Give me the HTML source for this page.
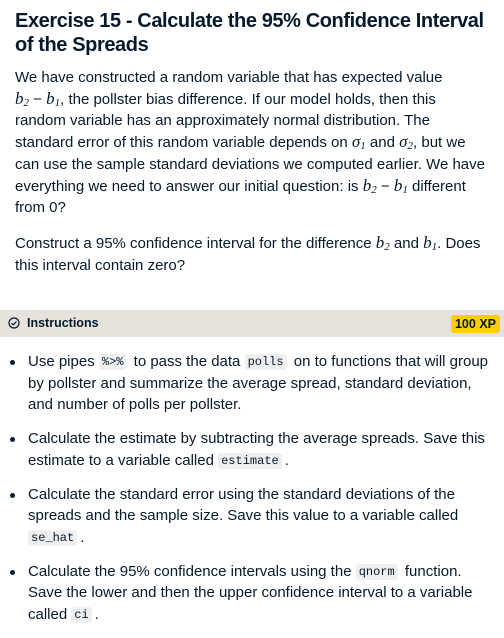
<!DOCTYPE html>
<html><head><style>
body{margin:0;width:504px;height:636px;overflow:hidden;background:#fff;font-family:"Liberation Sans",sans-serif;color:#05192d}
h1{margin:0;position:absolute;left:15px;top:9px;width:489px;font-size:20px;line-height:24px;font-weight:bold;letter-spacing:-0.4px}
p{margin:0;position:absolute;left:15px;font-size:15px;line-height:21.7px;white-space:nowrap}
i.m{font-family:"Liberation Serif",serif;font-size:17px;line-height:1}
sub{font-size:11px;vertical-align:-2px;line-height:0}
.bar{position:absolute;left:0;top:310px;width:504px;height:27px;background:#e6e2dc}
.bar span{position:absolute;left:27px;top:6px;font-size:12.5px;font-weight:bold}
.bar svg{position:absolute;left:8px;top:7px}
.xp{position:absolute;right:4px;top:5px;background:#fcce0d;border-radius:3px;font-size:12.5px;font-weight:bold;padding:1px 4px;line-height:16px}
ul{margin:0;padding:0;list-style:none;position:absolute;left:0;top:351px;width:504px}
li{position:relative;padding-left:28px;font-size:15px;line-height:21.7px;height:auto;white-space:nowrap;margin-bottom:12px}
li:before{content:"";position:absolute;left:10px;top:9px;width:5px;height:5px;border-radius:50%;background:#05192d}
code{font-family:"Liberation Mono",monospace;font-size:12px;line-height:12px;background:#efefef;border-radius:3px;padding:1px 3px;margin-right:3px;vertical-align:1px}
</style></head><body>
<h1>Exercise 15 - Calculate the 95% Confidence Interval of the Spreads</h1>
<p style="top:67px">We have constructed a random variable that has expected value<br><i class="m">b<sub>2</sub></i> − <i class="m">b<sub>1</sub></i>, the pollster bias difference. If our model holds, then this<br>random variable has an approximately normal distribution. The<br>standard error of this random variable depends on <i class="m">σ<sub>1</sub></i> and <i class="m">σ<sub>2</sub></i>, but we<br>can use the sample standard deviations we computed earlier. We have<br>everything we need to answer our initial question: is <i class="m">b<sub>2</sub></i> − <i class="m">b<sub>1</sub></i> different<br>from 0?</p>
<p style="top:233px">Construct a 95% confidence interval for the difference <i class="m">b<sub>2</sub></i> and <i class="m">b<sub>1</sub></i>. Does<br>this interval contain zero?</p>
<div class="bar"><svg width="12" height="12" viewBox="0 0 12 12"><circle cx="6" cy="6" r="5" fill="none" stroke="#05192d" stroke-width="1.2"/><path d="M3.5 6.2l1.7 1.6 3.3-3.3" fill="none" stroke="#05192d" stroke-width="1.2"/></svg><span>Instructions</span><div class="xp">100 XP</div></div>
<ul>
<li>Use pipes <code>%&gt;%</code> to pass the data <code>polls</code> on to functions that will group<br>by pollster and summarize the average spread, standard deviation,<br>and number of polls per pollster.</li>
<li>Calculate the estimate by subtracting the average spreads. Save this<br>estimate to a variable called <code>estimate</code>.</li>
<li>Calculate the standard error using the standard deviations of the<br>spreads and the sample size. Save this value to a variable called<br><code>se_hat</code>.</li>
<li>Calculate the 95% confidence intervals using the <code>qnorm</code> function.<br>Save the lower and then the upper confidence interval to a variable<br>called <code>ci</code>.</li>
</ul>
</body></html>
